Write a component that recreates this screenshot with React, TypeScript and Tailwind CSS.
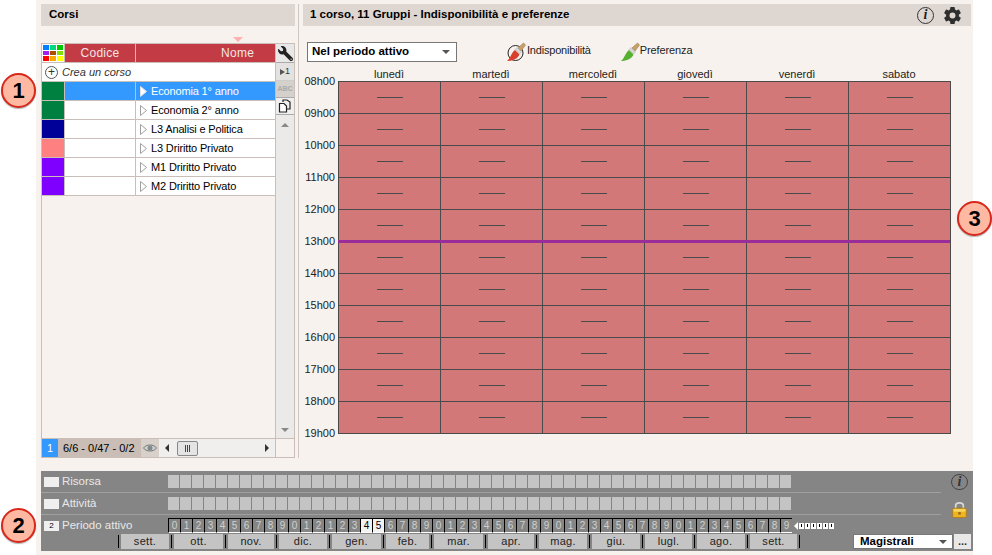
import { IoSettingsSharp } from "react-icons/io5";
import { FaWrench } from "react-icons/fa";

const courses = [
  { color: "bg-[#008040]", name: "Economia 1° anno", active: true },
  { color: "bg-[#008040]", name: "Economia 2° anno" },
  { color: "bg-[#000099]", name: "L3 Analisi e Politica" },
  { color: "bg-[#ff8080]", name: "L3 Driritto Privato" },
  { color: "bg-[#8000ff]", name: "M1 Driritto Privato" },
  { color: "bg-[#8000ff]", name: "M2 Driritto Privato" },
];

const days = ["lunedì", "martedì", "mercoledì", "giovedì", "venerdì", "sabato"];
const hours = ["08h00", "09h00", "10h00", "11h00", "12h00", "13h00", "14h00", "15h00", "16h00", "17h00", "18h00", "19h00"];
const palette = ["bg-[#0080ff]", "bg-[#00d880]", "bg-[#00c800]", "bg-[#a020f0]", "bg-[#a85000]", "bg-[#80e000]", "bg-[#ff0000]", "bg-[#ffa800]", "bg-[#ffff00]"];
const months = [
  { label: "sett.", w: "w-[48px]" },
  { label: "ott.", w: "w-[49px]" },
  { label: "nov.", w: "w-[46px]" },
  { label: "dic.", w: "w-[48px]" },
  { label: "gen.", w: "w-[49px]" },
  { label: "feb.", w: "w-[43px]" },
  { label: "mar.", w: "w-[49px]" },
  { label: "apr.", w: "w-[46px]" },
  { label: "mag.", w: "w-[48px]" },
  { label: "giu.", w: "w-[48px]" },
  { label: "lugl.", w: "w-[47px]" },
  { label: "ago.", w: "w-[48px]" },
  { label: "sett.", w: "w-[47px]" },
];

const weeks = Array.from({ length: 52 }, (_, i) => i);

const Callout = ({ n, className }: { n: number; className: string }) => (
  <div className={`absolute flex h-[35px] w-[35px] items-center justify-center rounded-full border-[2px] border-[#d8281c] bg-[#ffb9a3] text-[22px] font-bold text-black shadow-[0_1px_1px_rgba(0,0,0,0.3)] ${className}`}>
    {n}
  </div>
);

const Brush = ({ color, ring }: { color: string; ring?: boolean }) => (
  <svg width="19" height="20" viewBox="0 0 19 20">
    {ring && <circle cx="8.5" cy="11" r="7.5" fill="none" stroke="#222" strokeWidth="1" />}
    <path d="M11 6 L16.5 1 L18.5 3 L14 9 Z" fill="#c9a06a" stroke="#8a6a3a" strokeWidth="0.5" />
    <path d="M10 5.5 L14.5 10 L12.5 12 L8 7.5 Z" fill="#d8d8d8" stroke="#999" strokeWidth="0.4" />
    <path d="M8 8 L12.5 12.5 C11 16.5 6 19 0 19 C3.5 16.5 4 11 8 8 Z" fill={color} />
  </svg>
);

const InfoIcon = ({ dark }: { dark?: boolean }) => (
  <div className={`flex h-[17px] w-[17px] items-center justify-center rounded-full border ${dark ? "border-[#444]" : "border-[#333]"} font-['Liberation_Serif',serif] text-[14px] font-bold italic leading-none ${dark ? "text-[#333]" : "text-[#222]"}`}>
    i
  </div>
);

const LockIcon = () => (
  <svg width="17" height="20" viewBox="0 0 17 20">
    <path d="M4 9 V5.5 C4 1 13 1 13 5.5 V9" fill="none" stroke="#d8d8d8" strokeWidth="2" />
    <rect x="0.5" y="8.5" width="16" height="11" rx="1.5" fill="#eeb422" stroke="#b07a10" />
    <rect x="1.5" y="9.5" width="14" height="3" fill="#f8d860" />
    <rect x="7" y="13" width="3" height="3" fill="#a06a10" />
  </svg>
);

const RowArrow = ({ active }: { active?: boolean }) => (
  <svg width="7" height="11" viewBox="0 0 7 11">
    <path d="M0.5 0.5 L6.5 5.5 L0.5 10.5 Z" fill="#ffffff" stroke={active ? "#e0e0e0" : "#a0a0a0"} />
  </svg>
);

const CoursesPanel = () => (
  <div className="flex w-[254px] flex-col">
    <div className="flex h-[22px] items-center bg-[#ded6d1] pl-[8px] text-[11.5px] font-bold text-black">Corsi</div>
    <div className="relative mt-[11px] flex h-[6px] justify-end pr-[52px]">
      <div className="h-0 w-0 border-x-[5px] border-t-[5px] border-x-transparent border-t-[#ffb0b0]" />
    </div>
    <div className="flex h-[415px] border border-[#c9bfb8] bg-[#f7f2ee]">
      <div className="flex w-[235px] flex-col border-r border-[#c9bfb8]">
        <div className="flex h-[19px] shrink-0 border-b border-[#c9bfb8] bg-[#c23b45] text-[12px] tracking-[0.25px] text-[#f2e6e6]">
          <div className="grid w-[23px] shrink-0 grid-cols-3 gap-px border-r border-[#c9bfb8] bg-white p-px">
            {palette.map((c, i) => (
              <div key={i} className={c} />
            ))}
          </div>
          <div className="flex w-[71px] shrink-0 items-center justify-center border-r border-[#c9bfb8]">Codice</div>
          <div className="flex flex-1 items-center justify-end pr-[21px]">Nome</div>
        </div>
        <div className="flex h-[19px] shrink-0 items-center gap-[4px] border-b border-[#c9bfb8] bg-white pl-[3px] text-[11px] italic text-[#333]">
          <div className="flex h-[13px] w-[13px] items-center justify-center rounded-full border border-[#555] text-[12px] not-italic leading-none">+</div>
          Crea un corso
        </div>
        {courses.map((c) => (
          <div key={c.name} className={`flex h-[19px] shrink-0 border-b border-[#c9bfb8] text-[11px] tracking-[-0.15px] ${c.active ? "bg-[#3399ff] text-white" : "bg-white text-black"}`}>
            <div className={`w-[23px] shrink-0 border-r border-[#c9bfb8] ${c.color}`} />
            <div className="w-[71px] shrink-0 border-r border-[#c9bfb8]" />
            <div className="flex flex-1 items-center pl-[4px]">
              <RowArrow active={c.active} />
              <span className="ml-[4px]">{c.name}</span>
            </div>
          </div>
        ))}
        <div className="flex-1" />
        <div className="flex h-[19px] shrink-0 border-t border-[#c9bfb8]">
          <div className="flex w-[16px] items-center justify-center bg-[#3399ff] text-[11px] text-white">1</div>
          <div className="flex w-[83px] items-center bg-[#c9bdb5] pl-[5px] text-[11px] text-black">6/6 - 0/47 - 0/2</div>
          <div className="flex w-[18px] items-center justify-center bg-[#d8d0ca]">
            <svg width="14" height="10" viewBox="0 0 14 10">
              <path d="M0.5 5 C3 1 11 1 13.5 5 C11 9 3 9 0.5 5 Z" fill="#d0d0cc" stroke="#777" />
              <circle cx="7" cy="5" r="2.5" fill="#808a88" />
            </svg>
          </div>
          <div className="flex flex-1 items-center bg-[#f1efed] pl-[6px] pr-[6px]">
            <div className="h-0 w-0 border-y-[4px] border-r-[4px] border-y-transparent border-r-[#333]" />
            <div className="ml-[8px] flex h-[15px] w-[21px] items-center justify-center gap-px rounded-[2px] border border-[#888] bg-[#e4e4e4]">
              <div className="h-[7px] w-px bg-[#444]" />
              <div className="h-[7px] w-px bg-[#444]" />
              <div className="h-[7px] w-px bg-[#444]" />
            </div>
            <div className="ml-auto h-0 w-0 border-y-[4px] border-l-[4px] border-y-transparent border-l-[#333]" />
          </div>
        </div>
      </div>
      <div className="flex w-[18px] flex-col">
        <div className="flex h-[19px] items-center justify-center border-b border-[#aaa] bg-[#e8e8e8]">
          <FaWrench className="h-[15px] w-[15px] -scale-x-100 text-[#222]" />
        </div>
        <div className="flex h-[18px] items-center justify-center border-b border-[#ccc] bg-[#e4e2e0] text-[9px] text-[#333]">
          <div className="h-0 w-0 border-y-[3px] border-l-[5px] border-y-transparent border-l-[#555]" />1
        </div>
        <div className="flex h-[16px] items-center justify-center bg-[#d4d0cc] text-[7px] font-bold text-[#aaa]">ABC</div>
        <div className="flex h-[18px] items-center justify-center border-y border-[#aaa] bg-[#efefef]">
          <svg width="14" height="14" viewBox="0 0 14 14" fill="none" stroke="#222" strokeWidth="1.2">
            <path d="M5 3 V1 H9 L12 3 V10 H9" />
            <path d="M1.5 4.5 H6 L8.5 7 V13 H1.5 Z" fill="#fff" />
          </svg>
        </div>
        <div className="flex flex-1 flex-col items-center justify-between bg-[#eceae8] pb-[6px] pt-[8px]">
          <div className="h-0 w-0 border-x-[4px] border-b-[4px] border-x-transparent border-b-[#888]" />
          <div className="h-0 w-0 border-x-[4px] border-t-[4px] border-x-transparent border-t-[#888]" />
        </div>
        <div className="h-[19px] shrink-0 border-t border-[#c9bfb8]" />
      </div>
    </div>
  </div>
);

const SchedulePanel = () => (
  <div className="flex w-[668px] flex-col">
    <div className="flex h-[22px] items-center bg-[#ded6d1] pl-[7px] pr-[9px] text-[11.5px] font-bold text-black">
      <span>1 corso, 11 Gruppi - Indisponibilità e preferenze</span>
      <div className="ml-auto flex items-center gap-[9px]">
        <InfoIcon />
        <IoSettingsSharp className="h-[19px] w-[19px] text-[#2e2e2e]" />
      </div>
    </div>
    <div className="mt-[16px] flex h-[20px] items-center pl-[4px]">
      <div className="flex h-[20px] w-[150px] items-center border border-[#777] bg-white pl-[4px] pr-[6px] text-[11.5px] font-bold text-black">
        Nel periodo attivo
        <div className="ml-auto h-0 w-0 border-x-[4px] border-t-[4px] border-x-transparent border-t-[#555]" />
      </div>
      <div className="ml-[50px] flex items-center text-[11px] tracking-[-0.2px] text-[#222]">
        <Brush color="#d8402c" ring />
        <span className="-mt-[3px] ml-px">Indisponibilità</span>
      </div>
      <div className="ml-[30px] flex items-center text-[11px] tracking-[-0.1px] text-[#222]">
        <Brush color="#58b030" />
        <span className="-mt-[3px]">Preferenza</span>
      </div>
    </div>
    <div className="mt-[6px] flex h-[13px] pl-[35px] text-[11px] text-[#222]">
      {days.map((d) => (
        <div key={d} className="w-[102px] text-center leading-[13px]">{d}</div>
      ))}
    </div>
    <div className="flex">
      <div className="h-[353px] w-[35px] pr-[3px] text-right text-[11px] leading-[14px] text-[#222]">
        {hours.map((h) => (
          <div key={h} className="h-[32px] -translate-y-[7px]">{h}</div>
        ))}
      </div>
      <div className="relative h-[353px] w-[613px] border-b border-r border-[#4a4a4a] bg-[#d27878]">
        <div className="grid grid-cols-6">
          {Array.from({ length: 66 }, (_, i) => (
            <div key={i} className="flex h-[32px] items-center justify-center border-l border-t border-[#4a4a4a]">
              <div className="h-px w-[26px] bg-[#4a4a4a]" />
            </div>
          ))}
        </div>
        <div className="absolute left-0 right-0 top-[159px] h-[3px] bg-[#9b2d98]" />
      </div>
    </div>
  </div>
);

const BottomPanel = () => (
  <div className="mt-[13px] flex h-[80px] w-[932px] flex-col bg-[#858585] text-[11.5px] text-[#e8e8e8]">
    <div className="flex h-[47px] shrink-0">
      <div className="flex w-[900px] flex-col pt-[4px]">
        {["Risorsa", "Attività"].map((label) => (
          <div key={label}>
            <div className="flex h-[13px] items-center">
              <div className="ml-[3px] h-[10px] w-[15px] bg-[#efefef]" />
              <div className="ml-[3px] w-[106px]">{label}</div>
              <div className="flex gap-px">
                {weeks.map((w) => (
                  <div key={w} className="h-[13px] w-[11px] bg-[#c4c4c4]" />
                ))}
              </div>
            </div>
            <div className="mb-[4px] mt-[4px] h-px bg-[#a0a0a0]" />
          </div>
        ))}
      </div>
      <div className="flex flex-1 flex-col items-center gap-[11px] pl-[5px] pt-[3px]">
        <InfoIcon dark />
        <LockIcon />
      </div>
    </div>
    <div className="flex h-[15px] shrink-0 items-center">
      <div className="ml-[3px] flex h-[10px] w-[15px] items-center justify-center bg-[#efefef] text-[8px] text-black">2</div>
      <div className="ml-[3px] w-[106px]">Periodo attivo</div>
      <div className="flex h-[15px]">
        {weeks.map((w) => {
          const on = w === 16 || w === 17;
          const digit = w < 13 ? w % 10 : (w - 12) % 10;
          return (
            <div key={w} className={`flex h-[15px] w-[12px] items-end justify-center border-b border-l border-t border-b-white border-l-black border-t-black text-[10px] leading-[13px] ${on ? "bg-[#f2f2f2] text-black" : "text-[#d0d0d0]"}`}>
              {digit}
            </div>
          );
        })}
      </div>
      <div className="ml-[2px] flex h-[8px] items-center">
        <div className="h-0 w-0 border-y-[4px] border-r-[4px] border-y-transparent border-r-white" />
        <div className="ml-[1px] flex gap-px">
          {[0, 1, 2, 3, 4, 5].map((i) => (
            <div key={i} className="flex h-[6px] w-[5px] items-center justify-center bg-white">
              <div className="h-[3px] w-px bg-black" />
            </div>
          ))}
        </div>
      </div>
    </div>
    <div className="mt-px flex h-[15px] shrink-0 items-center pl-[77px] text-[11px]">
      {months.map((m, i) => (
        <div key={i} className="flex items-center">
          <div className="h-[13px] w-px bg-black" />
          <div className={`ml-[2px] mr-[2px] flex h-[15px] items-center justify-center bg-[#c4c4c4] text-[#222] tracking-[0.3px] ${m.w}`}>{m.label}</div>
        </div>
      ))}
      <div className="h-[13px] w-px bg-black" />
      <div className="ml-[53px] flex h-[15px] w-[100px] items-center border border-[#777] bg-white pl-[6px] pr-[5px] text-[11.5px] font-bold text-black">
        Magistrali
        <div className="ml-auto h-0 w-0 border-x-[4px] border-t-[4px] border-x-transparent border-t-[#555]" />
      </div>
      <div className="ml-px flex h-[15px] w-[17px] items-center justify-center bg-[#e8e8e8] text-[11px] font-bold leading-none text-[#333]">...</div>
    </div>
  </div>
);

export default function App() {
  return (
    <div className="relative flex h-[555px] w-[992px] overflow-hidden bg-white font-['Liberation_Sans',sans-serif]">
      <div className="ml-[36px] flex w-[937px] flex-col bg-[#f7f2ee] pl-[5px] pt-[4px]">
        <div className="flex h-[454px] shrink-0">
          <CoursesPanel />
          <div className="ml-[3px] mr-[4px] w-px bg-[#cfc7c2]" />
          <SchedulePanel />
        </div>
        <BottomPanel />
      </div>
      <Callout n={1} className="left-[1px] top-[73px]" />
      <Callout n={2} className="left-[1px] top-[508px]" />
      <Callout n={3} className="left-[957px] top-[201px]" />
    </div>
  );
}
